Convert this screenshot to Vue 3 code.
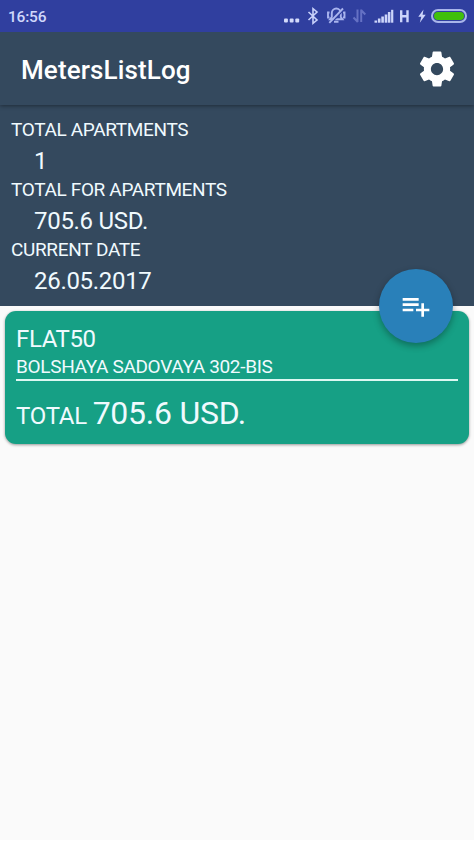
<script setup>
const totals = [
  { label: 'TOTAL APARTMENTS', value: '1' },
  { label: 'TOTAL FOR APARTMENTS', value: '705.6 USD.' },
  { label: 'CURRENT DATE', value: '26.05.2017' },
]
const flat = { name: 'FLAT50', address: 'BOLSHAYA SADOVAYA 302-BIS', total: '705.6 USD.' }
</script>

<template>
  <div class="screen">
    <header class="status">
      <span class="clock">16:56</span>
      <svg class="status-icons" width="157" height="32" viewBox="0 0 157 32">
        <g fill="#d3dafb">
          <rect x="10" y="18.500" width="3.900" height="4" rx="1" />
          <rect x="15.700" y="18.500" width="3.900" height="4" rx="1" />
          <rect x="21.300" y="18.500" width="3.900" height="4" rx="1" />
        </g>
        <path d="M34.500 12 L43 20 L39 23.300 V8.700 L43 12 L34.500 20" fill="none" stroke="#c9d1fa" stroke-width="1.600" />
        <g fill="none" stroke="#a9b4ee" stroke-width="1.900">
          <path d="M56 19.300 h12.500 l-1.700 -2.300 v-4 a4.500 4.500 0 0 0 -9 0 v4 z" />
          <path d="M60 21.800 h4.500 M55.500 12.500 H54 V17.500 H55.500 M69 12.500 H70.500 V17.500 H69" />
          <path d="M57.300 22.800 L70 9.500" stroke="#303f9f" stroke-width="1.600" />
          <path d="M55.300 22.800 L69 8.500" />
        </g>
        <g fill="none" stroke="#6571c4" stroke-width="2">
          <path d="M83.500 22 V9.500 M83.800 22 L79.500 17.500" />
          <path d="M87.200 22 V9.500 M87 10 L91.300 14.500" />
        </g>
        <g fill="#cdd5fa">
          <rect x="100.500" y="20.500" width="2.600" height="2.200" />
          <rect x="103.900" y="18.500" width="2.600" height="4.200" />
          <rect x="107.300" y="16.500" width="2.600" height="6.200" />
          <rect x="110.700" y="14.500" width="2.600" height="8.200" />
          <rect x="113.900" y="12" width="2.500" height="10.700" />
          <rect x="117.100" y="9.800" width="2.200" height="12.900" />
        </g>
        <path d="M127.200 10.300 V22.300 M133.500 10.300 V22.300 M127 16.200 H133.500" fill="none" stroke="#cdd5fa" stroke-width="2.400" />
        <path d="M149.500 9.500 L144.300 16.800 H147.300 L145.800 22.800 L151.700 14.800 H148.600 Z" fill="#cdd5fa" />
      </svg>
      <span class="battery"><i></i></span>
    </header>

    <div class="toolbar">
      <h1>MetersListLog</h1>
      <svg class="gear" width="42" height="42" viewBox="0 0 24 24">
        <path fill="#fff" d="M19.430 12.980c.04-.32.07-.64.07-.98s-.03-.66-.07-.98l2.110-1.650c.19-.15.24-.42.12-.64l-2-3.460c-.12-.22-.39-.3-.61-.22l-2.490 1c-.52-.4-1.080-.73-1.690-.98l-.38-2.650C14.460 2.180 14.250 2 14 2h-4c-.25 0-.46.18-.49.42l-.38 2.650c-.61.25-1.170.59-1.690.98l-2.490-1c-.23-.09-.49 0-.61.22l-2 3.460c-.13.22-.07.49.12.64l2.110 1.650c-.04.32-.07.65-.07.98s.03.66.07.98l-2.110 1.650c-.19.15-.24.42-.12.64l2 3.460c.12.22.39.3.61.22l2.490-1c.52.4 1.080.73 1.690.98l.38 2.650c.03.24.24.42.49.42h4c.25 0 .46-.18.49-.42l.38-2.650c.61-.25 1.170-.59 1.690-.98l2.490 1c.23.09.49 0 .61-.22l2-3.460c.12-.22.07-.49-.12-.64l-2.110-1.650zM12 15.500c-1.930 0-3.500-1.570-3.500-3.500s1.570-3.500 3.500-3.500 3.500 1.570 3.500 3.500-1.570 3.500-3.500 3.500z" />
      </svg>
    </div>

    <section class="summary">
      <template v-for="t in totals" :key="t.label">
        <div class="label">{{ t.label }}</div>
        <div class="value">{{ t.value }}</div>
      </template>
      <button class="fab" aria-label="Add">
        <svg width="32" height="32" viewBox="0 0 24 24">
          <path fill="#fff" d="M14 10H2v2h12v-2zm0-4H2v2h12V6zm4 8v-4h-2v4h-4v2h4v4h2v-4h4v-2h-4zM2 16h8v-2H2v2z" />
        </svg>
      </button>
    </section>

    <main class="list">
      <article class="card">
        <div class="name">{{ flat.name }}</div>
        <div class="address">{{ flat.address }}</div>
        <div class="total"><span>TOTAL</span> <b>{{ flat.total }}</b></div>
      </article>
    </main>
  </div>
</template>

<style>
body {
  background: #fff;
}
</style>

<style scoped>
.screen {
  height: 840px;
  display: flex;
  flex-direction: column;
  background: #fafafa;
  font-family: Roboto, "Liberation Sans", sans-serif;
  color: #f0fafe;
  overflow: hidden;
}
.status {
  height: 32px;
  flex: none;
  display: flex;
  align-items: center;
  background: #303f9f;
  padding: 0 7px 0 8px;
  box-sizing: border-box;
}
.clock {
  margin-top: 1px;
  font-size: 15.500px;
  letter-spacing: -0.200px;
  font-weight: 500;
  color: #d0d8fb;
  flex: 1;
}
.status-icons {
  flex: none;
}
.battery {
  width: 36px;
  height: 14px;
  box-sizing: border-box;
  border: 2px solid #a9b5ea;
  border-radius: 7px;
  padding: 1px;
  display: flex;
  flex: none;
}
.battery i {
  flex: 1;
  border-radius: 4px;
  background: #40c00c;
}
.toolbar {
  height: 73px;
  flex: none;
  display: flex;
  align-items: center;
  justify-content: space-between;
  box-sizing: border-box;
  padding: 0 16px 0 21px;
  background: #34495e;
  box-shadow: 0 1px 4px rgba(0, 0, 0, 0.4);
  position: relative;
  z-index: 1;
  clip-path: inset(0 0 -8px 0);
}
h1 {
  margin: 3px 0 0;
  font-size: 26px;
  line-height: 32px;
  letter-spacing: 0.120px;
  font-weight: 500;
  color: #fff;
}
.summary {
  height: 201px;
  flex: none;
  box-sizing: border-box;
  padding: 12.500px 11px 0;
  background: #34495e;
  position: relative;
}
.label {
  font-size: 19px;
  line-height: 24px;
  letter-spacing: -0.350px;
}
.value {
  margin: 2px 0 0 23px;
  font-size: 24px;
  line-height: 34px;
  letter-spacing: -0.300px;
}
.fab {
  position: absolute;
  right: 21px;
  bottom: -37px;
  width: 74px;
  height: 74px;
  border: 0;
  border-radius: 50%;
  padding: 0;
  background: #2980b9;
  display: flex;
  align-items: center;
  justify-content: center;
  box-shadow: 0 3px 7px rgba(0, 0, 0, 0.32);
  z-index: 1;
}
.list {
  padding: 5px 5px 0;
}
.card {
  height: 133px;
  box-sizing: border-box;
  border-radius: 11px;
  padding: 12px 11px 0;
  background: #16a085;
  box-shadow: 0 1px 3px rgba(0, 0, 0, 0.4);
}
.name {
  font-size: 24px;
  line-height: 32px;
  letter-spacing: -0.350px;
}
.address {
  font-size: 19px;
  line-height: 24px;
  letter-spacing: -0.320px;
  border-bottom: 2px solid #dcf8f2;
}
.total {
  margin-top: 12px;
  font-size: 24px;
  line-height: 40px;
  letter-spacing: -0.250px;
}
.total b {
  font-size: 32px;
  font-weight: 400;
}
</style>
